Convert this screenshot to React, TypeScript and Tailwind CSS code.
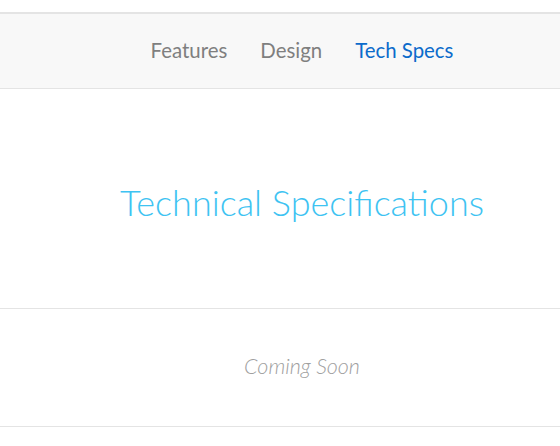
export default function App() {
  return (
    <div className="min-h-[446px] bg-white font-['Lato',sans-serif]">
      <div className="h-3" />
      <nav className="h-[77px] border-t-2 border-b border-[#e4e4e4] bg-[#f8f8f8] pb-[1px] pl-11">
        <ul className="flex h-full items-center justify-center gap-[33px] text-[20.4px]">
          <li className="text-[#7f7f7f]">Features</li>
          <li className="text-[#7f7f7f]">Design</li>
          <li className="text-[#0b6bcb]">Tech Specs</li>
        </ul>
      </nav>
      <section className="flex h-[220px] items-center justify-center border-b border-[#e4e4e4] pl-11 pt-[6px]">
        <h1 className="text-[36px] font-light text-[#3ec3f2]">Technical Specifications</h1>
      </section>
      <section className="flex h-[118px] items-center justify-center border-b border-[#e4e4e4] pb-[3px] pl-11">
        <p className="text-[21.5px] italic font-light text-[#a0a0a0]">Coming Soon</p>
      </section>
    </div>
  );
}
